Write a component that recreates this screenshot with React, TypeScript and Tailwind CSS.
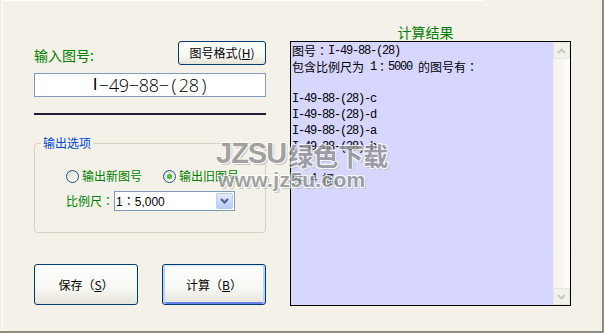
import React from "react";

const CJK = "font-['Noto_Sans_CJK_SC','Noto_Sans_CJK_JP',sans-serif]";

function Mixed({ t }: { t: string }) {
  const parts = t.split(/([\x20-\x7e]+|：)/).filter((p) => p.length > 0);
  return (
    <>
      {parts.map((p, i) =>
        p === "：" ? (
          <span key={i} className="font-['Noto_Sans_CJK_JP',sans-serif]">
            ：
          </span>
        ) : /^[\x20-\x7e]+$/.test(p) ? (
          <span
            key={i}
            className="font-['Liberation_Mono',monospace] text-[12px] tracking-[-1.2px] whitespace-pre"
          >
            {p}
          </span>
        ) : (
          <span key={i} className="whitespace-pre">
            {p}
          </span>
        )
      )}
    </>
  );
}

function Chevron({ up, color }: { up?: boolean; color: string }) {
  return (
    <svg width="9" height="6" viewBox="0 0 9 6">
      <path
        d={up ? "M1 5 L4.5 1.5 L8 5" : "M1 1 L4.5 4.5 L8 1"}
        fill="none"
        stroke={color}
        strokeWidth="2"
      />
    </svg>
  );
}

function Radio({ checked }: { checked?: boolean }) {
  return (
    <span className="w-[13px] h-[13px] rounded-full border border-[#1C5180] bg-[linear-gradient(135deg,#DCDCD5,#FFFFFF)] flex items-center justify-center shrink-0">
      {checked && (
        <span className="w-[5px] h-[5px] rounded-full bg-[radial-gradient(circle,#55D551,#21A121)]" />
      )}
    </span>
  );
}

const WM =
  "text-[#8E8E8E] [text-shadow:1px_1px_0_#fff,-1px_-1px_0_#fff,1px_-1px_0_#fff,-1px_1px_0_#fff,2px_2px_0_#bdbdbd]";

export default function App() {
  const lines = [
    "图号：I-49-88-(28)",
    "包含比例尺为 1：5000 的图号有：",
    "",
    "I-49-88-(28)-c",
    "I-49-88-(28)-d",
    "I-49-88-(28)-a",
    "I-49-88-(28)-b",
    "",
    "共 4 幅。",
  ];
  const inputChars = ["−", "4", "9", "−", "8", "8", "−", "(", "2", "8", ")"];

  const btn =
    "border border-[#003C74] rounded-[3px] bg-[linear-gradient(180deg,#FFFFFF_0%,#F7F7F3_60%,#E6E3D8_100%)] text-[12px] text-black flex items-center justify-center";

  return (
    <div
      className={`relative w-[604px] h-[333px] overflow-hidden bg-[#F4F2E8] border-b-2 border-r-2 border-[#8D8C7D] shadow-[inset_2px_0_0_#F4F2E8,inset_3px_0_0_#FFFFFF] ${CJK}`}
    >
      <div className="ml-[3px] w-[480px] h-[1px] bg-white" />
      <div className="flex">
        {/* Left column */}
        <div className="ml-[34px] w-[232px] flex flex-col">
          <div className="mt-[40px] h-[24px] flex items-end justify-between">
            <span className="text-[14px] leading-[16px] text-[#008000] mb-[2px]">
              输入图号:
            </span>
            <button className={`${btn} w-[88px] h-[24px]`}>
              图号格式(<span className="underline">H</span>)
            </button>
          </div>
          <div className="mt-[8px] h-[24px] border border-[#7F9DB9] bg-white flex items-center justify-center font-['Open_Sans',sans-serif] font-light text-[18px] leading-[16px] text-black">
            <span className="w-[8px] inline-flex justify-center font-['Liberation_Sans',sans-serif] font-normal text-[17px]">
              I
            </span>
            {inputChars.map((c, i) => (
              <span key={i} className="w-[10px] inline-flex justify-center">
                {c}
              </span>
            ))}
          </div>
          <div className="mt-[16px] h-[2px] bg-[#1C1C36]" />
          <fieldset className="mt-[21px] h-[97px] border border-[#D5D2C3] rounded-[4px]">
            <legend className="ml-[6px] px-[2px] text-[12px] leading-[14px] text-[#0046D5]">
              输出选项
            </legend>
            <div className="mt-[19px] ml-[31px] flex items-center h-[14px]">
              <Radio />
              <span className="ml-[3px] text-[12px] leading-[14px] text-[#008000] whitespace-nowrap">
                输出新图号
              </span>
              <span className="ml-[21px]">
                <Radio checked />
              </span>
              <span className="ml-[3px] text-[12px] leading-[14px] text-[#008000] whitespace-nowrap">
                输出旧图号
              </span>
            </div>
            <div className="mt-[8px] ml-[31px] flex items-center h-[20px]">
              <span className="text-[12px] leading-[14px] text-[#008000] w-[48px] shrink-0 whitespace-nowrap">
                比例尺<span className="font-['Noto_Sans_CJK_JP',sans-serif]">：</span>
              </span>
              <div className="w-[121px] h-[20px] border border-[#7F9DB9] bg-white flex items-center">
                <span className="ml-[1px] flex-1 text-[12px] text-black whitespace-nowrap">
                  <span className="font-['Liberation_Sans',sans-serif]">1</span>
                  <span className="font-['Noto_Sans_CJK_JP',sans-serif]">：</span>
                  <span className="font-['Liberation_Sans',sans-serif]">5,000</span>
                </span>
                <span className="mr-[1px] w-[17px] h-[16px] rounded-[2px] border border-[#B9CCF5] bg-[linear-gradient(180deg,#E2EBFE,#B7CCF7)] flex items-center justify-center">
                  <Chevron color="#4D6185" />
                </span>
              </div>
            </div>
          </fieldset>
          <div className="mt-[31px] flex justify-between">
            <button className={`${btn} w-[104px] h-[41px]`}>
              保存（<span className="underline">S</span>）
            </button>
            <button
              className={`${btn} w-[104px] h-[41px] shadow-[inset_0_1px_0_#CEE7FF,inset_2px_0_0_#B8D2F9,inset_-2px_0_0_#B8D2F9,inset_0_-2px_0_#6982EE]`}
            >
              计算（<span className="underline">B</span>）
            </button>
          </div>
        </div>

        {/* Right column */}
        <div className="ml-[24px] w-[281px] flex flex-col">
          <div className="mt-[23px] pr-[10px] text-center text-[14px] leading-[16px] text-[#008000]">
            计算结果
          </div>
          <div className="mt-[1px] h-[265px] border border-black bg-[#D6D6FF] flex">
            <div className="flex-1 pt-[1px] pl-[1px] text-[12px] leading-[16px] text-black">
              {lines.map((l, i) => (
                <div key={i} className="h-[16px] flex items-center">
                  <Mixed t={l} />
                </div>
              ))}
            </div>
            <div className="w-[17px] bg-[linear-gradient(90deg,#F3F1EA,#FEFEFB)] flex flex-col justify-between">
              <div className="w-[17px] h-[17px] rounded-[2px] border border-[#E8E6DC] bg-[#F2F1EA] flex items-center justify-center">
                <Chevron up color="#C9C8C0" />
              </div>
              <div className="w-[17px] h-[17px] rounded-[2px] border border-[#E8E6DC] bg-[#F2F1EA] flex items-center justify-center">
                <Chevron color="#C9C8C0" />
              </div>
            </div>
          </div>
        </div>
      </div>

      {/* watermark overlay */}
      <div className="absolute left-[216px] top-[139px] pointer-events-none opacity-80">
        <div className="flex items-end leading-none">
          <span className={`font-['Liberation_Sans',sans-serif] font-bold text-[29px] tracking-[-1px] ${WM}`}>
            JZSU
          </span>
          <span className={`ml-[2px] font-bold text-[25px] ${WM}`}>绿色下载</span>
        </div>
        <div className={`mt-[1px] ml-[2px] font-['Liberation_Sans',sans-serif] font-bold text-[21px] leading-none tracking-[0.3px] ${WM}`}>
          www.jz5u.com
        </div>
      </div>
    </div>
  );
}
